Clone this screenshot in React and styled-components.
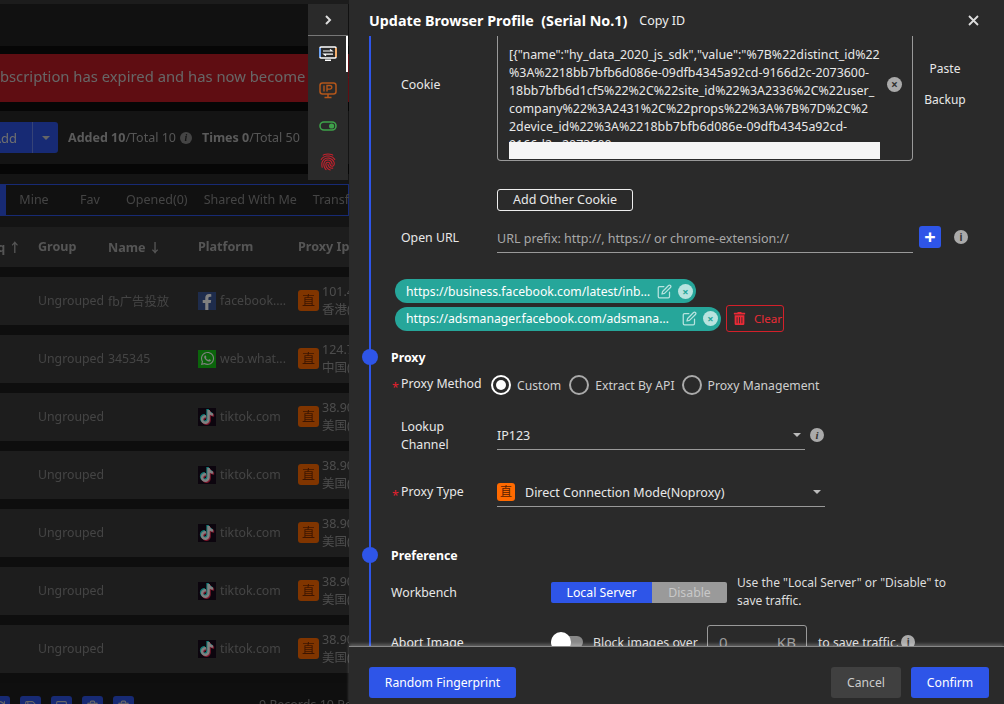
import React from 'react';
import styled, { createGlobalStyle } from 'styled-components';
import { FaFacebookF, FaWhatsapp, FaTiktok, FaTrashAlt } from 'react-icons/fa';
import { IoFingerPrint } from 'react-icons/io5';
import { FiEdit } from 'react-icons/fi';
import { Trash2, Square, Save, RefreshCw } from 'lucide-react';

const GlobalStyle = createGlobalStyle`
  html, body { margin: 0; padding: 0; background: #111; }
  body { font-family: "Noto Sans", "Noto Sans CJK SC", sans-serif; font-size: 13px; }
  * { box-sizing: border-box; }
`;

const Page = styled.div`
  display: flex;
  width: 1004px;
  height: 704px;
  overflow: hidden;
`;

/* background page behind the drawer */
const Behind = styled.div`
  position: relative;
  width: 349px;
  height: 704px;
  flex: none;
  overflow: hidden;
`;

const Dimmed = styled.div`
  height: 100%;
  background: #383838;
  color: #999;
  filter: brightness(0.5);
`;

const TopBar = styled.div`
  height: 46px;
  border-top: 4px solid #383838;
  background: #222;
`;

const Banner = styled.div`
  height: 65px;
  padding: 8px 0 9px;
  background: #0c0c0c;
`;

const BannerInner = styled.div`
  height: 48px;
  line-height: 45px;
  background: #be1a24;
  color: #ccc;
  font-size: 14.8px;
  white-space: nowrap;
  overflow: hidden;
  text-indent: -52px;
`;

const Toolbar = styled.div`
  height: 53px;
  display: flex;
  align-items: center;
  background: #282828;
  white-space: nowrap;
`;

const AddMain = styled.div`
  width: 33px;
  height: 31px;
  padding-right: 15px;
  display: flex;
  justify-content: flex-end;
  align-items: center;
  background: #2e55e8;
  color: #ddd;
  border-right: 1px solid #6c86ee;
`;

const AddCaret = styled.div`
  width: 25px;
  height: 31px;
  display: flex;
  justify-content: center;
  align-items: center;
  background: #2e55e8;
  border-radius: 0 3px 3px 0;
  &::after {
    content: '';
    border: 4px solid transparent;
    border-top: 4px solid #ccc;
    border-bottom: 0;
  }
`;

const Stat = styled.span`
  margin-left: ${p => p.$gap}px;
  font-size: 12.5px;
  color: #aaa;
  b { color: #b4b4b4; font-weight: 700; }
`;

const DimInfo = styled.span`
  width: 12px;
  height: 12px;
  margin-left: 4px;
  border-radius: 50%;
  background: #888;
  color: #282828;
  font: italic 700 10px/12px "Liberation Serif", serif;
  text-align: center;
`;

const Rule = styled.div`
  height: 10px;
  background: #0c0c0c;
`;

const TabsArea = styled.div`
  height: 53px;
  padding: 10px 0 11px;
  background: #282828;
`;

const Tabs = styled.div`
  height: 32px;
  display: flex;
  border: 1px solid #2e55e8;
  border-left: 0;
  background: #222;
  white-space: nowrap;
`;

const ActiveTab = styled.div`
  width: 6px;
  flex: none;
  background: #2e55e8;
`;

const Tab = styled.div`
  flex: none;
  min-width: 56px;
  padding: 0 8px;
  line-height: 30px;
  text-align: center;
  font-size: 12.5px;
  color: #888;
`;

const Table = styled.div`
  display: grid;
  grid-template-columns: 38px 70px 90px 100px 51px;
  white-space: nowrap;
  background: #1c1c1c;
`;

const HeadCell = styled.div`
  height: 40px;
  margin-bottom: 10px;
  padding-bottom: 2px;
  display: flex;
  align-items: center;
  gap: 5px;
  background: #393939;
  font-size: 12.6px;
  font-weight: 700;
  color: #aaa;
  ${p => p.$end && 'justify-content: flex-end; padding-right: 17px;'}
`;

const Cell = styled.div`
  height: 48px;
  margin-bottom: 10px;
  padding-bottom: 1px;
  display: flex;
  align-items: center;
  overflow: hidden;
  background: #393939;
  font-size: 12.3px;
  color: #888;
`;

const SiteIcon = styled.span`
  width: 18px;
  height: 18px;
  flex: none;
  margin-right: 4px;
  display: flex;
  align-items: ${p => p.$low ? 'flex-end' : 'center'};
  justify-content: center;
  overflow: hidden;
  background: ${p => p.$bg};
  color: #fff;
  font-size: ${p => p.$size}px;
  svg { ${p => p.$shade && 'filter: drop-shadow(-1px -1px 0 #25f4ee) drop-shadow(1px 1px 0 #fe2c55);'} }
`;

const DirectBadge = styled.span`
  width: 21px;
  height: 21px;
  flex: none;
  border-radius: 3px;
  background: #ff6a00;
  color: #7a2a00;
  font-size: 13px;
  line-height: 21px;
  text-align: center;
`;

const IpText = styled.div`
  margin-left: 3px;
  font-size: 12.5px;
  line-height: 18px;
  color: #999;
`;

const Pager = styled.div`
  height: 40px;
  display: flex;
  align-items: flex-start;
  padding-top: 13px;
  gap: 10px;
  background: #1e1e1e;
  margin-left: -11px;
`;

const PagerBtn = styled.span`
  width: 21px;
  height: 21px;
  flex: none;
  display: flex;
  align-items: center;
  justify-content: center;
  border-radius: 3px;
  background: #2e55e8;
  color: #ccc;
`;

const PagerText = styled.span`
  margin-left: 115px;
  color: #888;
  font-size: 12.5px;
  white-space: nowrap;
  line-height: 18px;
`;

/* icon rail on the edge of the drawer */
const Rail = styled.div`
  position: absolute;
  top: 4px;
  right: 1px;
  width: 40px;
  height: 176px;
  background: #2a2a2a;
`;

const RailHead = styled.div`
  height: 32px;
  display: flex;
  align-items: center;
  justify-content: center;
  border-bottom: 1px solid #777;
  color: #ddd;
`;

const RailItem = styled.div`
  position: relative;
  height: 36px;
  display: flex;
  align-items: center;
  justify-content: center;
  ${p => p.$active && `
    &::after {
      content: '';
      position: absolute;
      right: 0;
      top: 0;
      width: 2px;
      height: 36px;
      background: #fff;
    }
  `}
`;

/* drawer */
const Drawer = styled.div`
  flex: 1;
  display: flex;
  flex-direction: column;
  background: #2a2a2a;
  color: #e8e8e8;
`;

const DrawerHead = styled.div`
  height: 36px;
  flex: none;
  padding: 5px 25px 0 20px;
  display: flex;
  align-items: center;
`;

const DrawerTitle = styled.div`
  font-size: 14.3px;
  font-weight: 700;
  color: #fff;
  white-space: pre;
`;

const CopyId = styled.span`
  margin-left: 12px;
  font-size: 12.5px;
  color: #eee;
`;

const CloseBtn = styled.span`
  margin-left: auto;
  display: flex;
  color: #ddd;
`;

const DrawerBody = styled.div`
  flex: 1;
  min-height: 0;
  overflow: hidden;
  padding-left: 20px;
`;

const Timeline = styled.div`
  border-left: 2px solid #2e55e8;
  min-height: 640px;
`;

const FieldRow = styled.div`
  display: grid;
  grid-template-columns: 96px 1fr;
  padding-left: 30px;
  margin-top: ${p => p.$top || 0}px;
`;

const FieldLabel = styled.div`
  position: relative;
  padding-top: ${p => p.$pad || 0}px;
  font-size: 12.3px;
  line-height: 18px;
  ${p => p.$required && `
    &::before {
      content: '*';
      position: absolute;
      left: -9px;
      top: ${(p.$pad || 0) + 4}px;
      color: #e5202e;
    }
  `}
`;

const CookieWrap = styled.div`
  display: flex;
  align-items: flex-start;
  height: 125px;
`;

const CookieBox = styled.div`
  position: relative;
  width: 416px;
  height: 125px;
  padding: 10px 22px 0 11px;
  border: 1px solid #999;
  border-top: 0;
  border-radius: 0 0 4px 4px;
  overflow: hidden;
  font-size: 12.4px;
  line-height: 18px;
  white-space: nowrap;
`;

const CookieMask = styled.div`
  position: absolute;
  left: 11px;
  bottom: 1px;
  width: 371px;
  height: 17px;
  background: #f5f5f5;
`;

const ClearRound = styled.span`
  position: absolute;
  right: 10px;
  top: 41px;
  width: 15px;
  height: 15px;
  display: flex;
  align-items: center;
  justify-content: center;
  border-radius: 50%;
  background: #aaa;
  color: #333;
  font-size: 12px;
  font-weight: 700;
  line-height: 15px;
`;

const CookieSide = styled.div`
  width: 52px;
  margin-left: 6px;
  padding-top: 24px;
  display: flex;
  flex-direction: column;
  align-items: center;
  gap: 13px;
  font-size: 12px;
  line-height: 18px;
`;

const OutlineBtn = styled.div`
  width: 136px;
  height: 22px;
  margin: 28px 0 0 126px;
  border: 1px solid #eee;
  border-radius: 3px;
  text-align: center;
  font-size: 12.5px;
  line-height: 20px;
`;

const UnderlineInput = styled.div`
  width: ${p => p.$w}px;
  height: 29px;
  margin-top: ${p => p.$top || 0}px;
  display: flex;
  align-items: center;
  border-bottom: 1px solid #999;
  font-size: 12.5px;
  color: ${p => p.$muted ? '#a8a8a8' : '#e8e8e8'};
  white-space: nowrap;
`;

const InlineRow = styled.div`
  display: flex;
  align-items: flex-start;
`;

const PlusBtn = styled.span`
  width: 22px;
  height: 22px;
  margin: 2px 0 0 6px;
  border-radius: 3px;
  background: #2e55e8;
  color: #fff;
  font-size: 20px;
  font-weight: 700;
  line-height: 21px;
  text-align: center;
`;

const InfoDot = styled.span`
  width: 14px;
  height: 14px;
  flex: none;
  margin: ${p => p.$m || '0'};
  border-radius: 50%;
  background: #aaa;
  color: #333;
  font: ${p => p.$serif ? 'italic 700 11px/14px "Liberation Serif", serif' : '700 10px/14px "Noto Sans", sans-serif'};
  text-align: center;
`;

const ChipList = styled.div`
  margin: 26px 0 0 24px;
  display: flex;
  flex-direction: column;
  align-items: flex-start;
`;

const ChipLine = styled.div`
  display: flex;
  align-items: center;
  gap: 5px;
  margin-top: ${p => p.$top || 0}px;
`;

const Chip = styled.div`
  width: ${p => p.$w}px;
  height: 24px;
  flex: none;
  padding: 0 3px 0 11px;
  display: flex;
  align-items: center;
  border-radius: 12px;
  background: #26a69a;
  color: #fff;
  font-size: 12.2px;
  white-space: nowrap;
`;

const ChipText = styled.span`
  flex: 1;
  min-width: 0;
  overflow: hidden;
  text-overflow: ellipsis;
`;

const ChipEdit = styled.span`
  margin-left: 6px;
  display: flex;
  color: #b8e3df;
`;

const ChipClose = styled.span`
  width: 15px;
  height: 15px;
  margin-left: 6px;
  border-radius: 50%;
  background: #b8e3df;
  color: #26a69a;
  font-size: 11px;
  font-weight: 700;
  line-height: 15px;
  text-align: center;
`;

const ClearBtn = styled.div`
  width: 58px;
  height: 27px;
  flex: none;
  display: flex;
  align-items: center;
  gap: 8px;
  padding-left: 6px;
  border: 1px solid #d3202a;
  border-radius: 3px;
  color: #ea2a36;
  font-size: 11.6px;
  white-space: nowrap;
`;

const SectionTitle = styled.div`
  position: relative;
  height: 20px;
  margin: ${p => p.$top}px 0 0 20px;
  font-size: 12.3px;
  font-weight: 700;
  line-height: 22px;
  color: #fff;
  &::before {
    content: '';
    position: absolute;
    left: -29px;
    top: 2px;
    width: 16px;
    height: 16px;
    border-radius: 50%;
    background: #2e55e8;
  }
`;

const RadioRow = styled.div`
  display: flex;
  align-items: center;
  height: 20px;
  margin-left: -6px;
  font-size: 12.2px;
  color: #cfcfcf;
`;

const Radio = styled.span`
  width: 20px;
  height: 20px;
  flex: none;
  margin: 0 6px 0 ${p => p.$gap}px;
  border-radius: 50%;
  border: 2px solid ${p => p.$on ? '#fff' : '#aaa'};
  display: flex;
  align-items: center;
  justify-content: center;
  &::after {
    content: '';
    width: 10px;
    height: 10px;
    border-radius: 50%;
    background: ${p => p.$on ? '#fff' : 'transparent'};
  }
`;

const Caret = styled.span`
  margin-left: auto;
  margin-right: 4px;
  border: 4px solid transparent;
  border-top: 4px solid #bbb;
  border-bottom: 0;
`;

const TypeIcon = styled.span`
  width: 18px;
  height: 18px;
  margin-right: 10px;
  border-radius: 3px;
  background: #ff6a00;
  color: #5a2000;
  font-size: 12px;
  line-height: 18px;
  text-align: center;
`;

const PrefRow = styled.div`
  display: grid;
  grid-template-columns: 160px auto 1fr;
  align-items: center;
  margin: ${p => p.$top}px 0 0 20px;
  font-size: 12.3px;
`;

const Segmented = styled.div`
  display: flex;
  width: 176px;
  height: 21px;
  border-radius: 2px;
  overflow: hidden;
  line-height: 21px;
  text-align: center;
`;

const Segment = styled.span`
  width: ${p => p.$w}px;
  background: ${p => p.$on ? '#2e55e8' : '#9a9a9a'};
  color: ${p => p.$on ? '#fff' : '#c8c8c8'};
`;

const HelpText = styled.div`
  margin-left: 10px;
  width: 226px;
  font-size: 12px;
  line-height: 18px;
  color: #ddd;
`;

const AbortWrap = styled.div`
  display: flex;
  align-items: center;
  color: #ddd;
  white-space: nowrap;
`;

const Toggle = styled.span`
  position: relative;
  width: 32px;
  height: 12px;
  margin-right: 10px;
  border-radius: 6px;
  background: #888;
  &::after {
    content: '';
    position: absolute;
    left: 0;
    top: -4px;
    width: 20px;
    height: 20px;
    border-radius: 50%;
    background: #fff;
  }
`;

const KbBox = styled.div`
  width: 100px;
  height: 34px;
  margin: 0 11px 0 9px;
  padding: 0 10px 0 11px;
  display: flex;
  align-items: center;
  justify-content: space-between;
  border: 1px solid #999;
  border-radius: 3px;
  font-size: 15px;
  color: #999;
`;

const Footer = styled.div`
  position: relative;
  height: 58px;
  flex: none;
  padding: 20px 15px 0 20px;
  display: flex;
  gap: 10px;
  border-top: 1px solid #888;
  box-shadow: 0 -2px 3px rgba(255, 255, 255, 0.25);
  background: #2a2a2a;
`;

const FootBtn = styled.div`
  width: ${p => p.$w}px;
  height: 31px;
  margin-left: ${p => p.$auto ? 'auto' : 0};
  border-radius: 3px;
  background: ${p => p.$grey ? '#404040' : '#2e55e8'};
  color: ${p => p.$grey ? '#ccc' : '#fff'};
  font-size: 12.2px;
  line-height: 31px;
  text-align: center;
`;

const cookieLines = [
  '[{"name":"hy_data_2020_js_sdk","value":"%7B%22distinct_id%22',
  '%3A%2218bb7bfb6d086e-09dfb4345a92cd-9166d2c-2073600-',
  '18bb7bfb6d1cf5%22%2C%22site_id%22%3A2336%2C%22user_',
  'company%22%3A2431%2C%22props%22%3A%7B%7D%2C%2',
  '2device_id%22%3A%2218bb7bfb6d086e-09dfb4345a92cd-',
  '9166d2c-2073600',
];

const rows = [
  { group: 'Ungrouped', name: 'fb广告投放', site: 'facebook....', kind: 'fb', ip: '101.4', area: '香港(' },
  { group: 'Ungrouped', name: '345345', site: 'web.what...', kind: 'wa', ip: '124.7', area: '中国(' },
  { group: 'Ungrouped', name: '', site: 'tiktok.com', kind: 'tt', ip: '38.90', area: '美国(' },
  { group: 'Ungrouped', name: '', site: 'tiktok.com', kind: 'tt', ip: '38.90', area: '美国(' },
  { group: 'Ungrouped', name: '', site: 'tiktok.com', kind: 'tt', ip: '38.90', area: '美国(' },
  { group: 'Ungrouped', name: '', site: 'tiktok.com', kind: 'tt', ip: '38.90', area: '美国(' },
  { group: 'Ungrouped', name: '', site: 'tiktok.com', kind: 'tt', ip: '38.90', area: '美国(' },
];

const Site = ({ kind }) => {
  if (kind === 'fb') return <SiteIcon $bg="#3b5998" $size={16} $low><FaFacebookF /></SiteIcon>;
  if (kind === 'wa') return <SiteIcon $bg="#16c816" $size={15}><FaWhatsapp /></SiteIcon>;
  return <SiteIcon $bg="#170a1c" $size={14} $shade><FaTiktok /></SiteIcon>;
};

const MonitorSwap = () => (
  <svg width="18" height="16" viewBox="0 0 18 16" fill="none">
    <rect x="1" y="1" width="16" height="11" rx="1" stroke="#fff" strokeWidth="1.6" />
    <path d="M1 2v9" stroke="#3f8cff" strokeWidth="1.4" />
    <path d="M17 2v9" stroke="#ff9d3f" strokeWidth="1.4" />
    <path d="M6 13.5h6v1.5H6z" fill="#fff" />
    <path d="M4 5h9l-2-1.6M14 8.2H5l2 1.6" stroke="#fff" strokeWidth="1.2" />
  </svg>
);

const MonitorIp = () => (
  <svg width="18" height="17" viewBox="0 0 18 17" fill="none" stroke="#b3561a" strokeWidth="1.5">
    <rect x="1" y="1" width="16" height="11" rx="2.5" />
    <path d="M9 12v3M5.5 15.5h7" />
    <path d="M5 3.5v6M8 9.5v-6h3a1.7 1.7 0 0 1 0 3.6H8" strokeWidth="1.4" />
  </svg>
);

const GreenToggle = () => (
  <svg width="18" height="10" viewBox="0 0 18 10" fill="none">
    <rect x="1" y="1" width="16" height="8" rx="4" stroke="#3ea24a" strokeWidth="1.6" />
    <circle cx="12.6" cy="5" r="2.6" fill="#3ea24a" />
  </svg>
);

const App = () => (
  <Page>
    <GlobalStyle />
    <Behind>
      <Dimmed>
        <TopBar />
        <Banner>
          <BannerInner>Your subscription has expired and has now become a free plan</BannerInner>
        </Banner>
        <Toolbar>
          <AddMain>Add</AddMain>
          <AddCaret />
          <Stat $gap={10}><b>Added 10</b>/Total 10</Stat>
          <DimInfo>i</DimInfo>
          <Stat $gap={10}><b>Times 0</b>/Total 50</Stat>
        </Toolbar>
        <Rule />
        <TabsArea>
          <Tabs>
            <ActiveTab />
            <Tab>Mine</Tab>
            <Tab>Fav</Tab>
            <Tab>Opened(0)</Tab>
            <Tab>Shared With Me</Tab>
            <Tab>Transfer</Tab>
          </Tabs>
        </TabsArea>
        <Table>
          <HeadCell $end>Seq ↑</HeadCell>
          <HeadCell>Group</HeadCell>
          <HeadCell>Name ↓</HeadCell>
          <HeadCell>Platform</HeadCell>
          <HeadCell>Proxy Ip</HeadCell>
          {rows.map((r, i) => (
            <React.Fragment key={i}>
              <Cell />
              <Cell>{r.group}</Cell>
              <Cell>{r.name}</Cell>
              <Cell><Site kind={r.kind} />{r.site}</Cell>
              <Cell>
                <DirectBadge>直</DirectBadge>
                <IpText>{r.ip}<br />{r.area}</IpText>
              </Cell>
            </React.Fragment>
          ))}
        </Table>
        <Pager>
          <PagerBtn><RefreshCw size={13} /></PagerBtn>
          <PagerBtn><Save size={13} /></PagerBtn>
          <PagerBtn><Square size={13} /></PagerBtn>
          <PagerBtn><Trash2 size={13} /></PagerBtn>
          <PagerBtn><Trash2 size={13} /></PagerBtn>
          <PagerText>9 Records 10 Per</PagerText>
        </Pager>
      </Dimmed>
      <Rail>
        <RailHead>
          <svg width="10" height="12" viewBox="0 0 10 12" fill="none" stroke="#ddd" strokeWidth="2"><path d="M3 2l4 4-4 4" /></svg>
        </RailHead>
        <RailItem $active><MonitorSwap /></RailItem>
        <RailItem><MonitorIp /></RailItem>
        <RailItem><GreenToggle /></RailItem>
        <RailItem><IoFingerPrint size={18} color="#c8202c" /></RailItem>
      </Rail>
    </Behind>
    <Drawer>
      <DrawerHead>
        <DrawerTitle>Update Browser Profile  (Serial No.1)</DrawerTitle>
        <CopyId>Copy ID</CopyId>
        <CloseBtn>
          <svg width="11" height="11" viewBox="0 0 11 11" stroke="currentColor" strokeWidth="1.8"><path d="M1 1l9 9M10 1L1 10" /></svg>
        </CloseBtn>
      </DrawerHead>
      <DrawerBody>
        <Timeline>
          <FieldRow>
            <FieldLabel $pad={40}>Cookie</FieldLabel>
            <CookieWrap>
              <CookieBox>
                {cookieLines.map(l => <div key={l}>{l}</div>)}
                <CookieMask />
                <ClearRound>×</ClearRound>
              </CookieBox>
              <CookieSide>
                <span>Paste</span>
                <span>Backup</span>
              </CookieSide>
            </CookieWrap>
          </FieldRow>
          <OutlineBtn>Add Other Cookie</OutlineBtn>
          <FieldRow $top={13}>
            <FieldLabel $pad={5}>Open URL</FieldLabel>
            <InlineRow>
              <UnderlineInput $w={416} $muted>URL prefix: http://, https:// or chrome-extension://</UnderlineInput>
              <PlusBtn>+</PlusBtn>
              <InfoDot $m="6px 0 0 13px">i</InfoDot>
            </InlineRow>
          </FieldRow>
          <ChipList>
            <Chip $w={301}>
              <ChipText>https://business.facebook.com/latest/inbox/all</ChipText>
              <ChipEdit><FiEdit size={15} /></ChipEdit>
              <ChipClose>×</ChipClose>
            </Chip>
            <ChipLine $top={2}>
              <Chip $w={326}>
                <ChipText>https://adsmanager.facebook.com/adsmanager/manage</ChipText>
                <ChipEdit><FiEdit size={15} /></ChipEdit>
                <ChipClose>×</ChipClose>
              </Chip>
              <ClearBtn><FaTrashAlt size={13} />Clear</ClearBtn>
            </ChipLine>
          </ChipList>
          <SectionTitle $top={15}>Proxy</SectionTitle>
          <FieldRow $top={8}>
            <FieldLabel $required>Proxy Method</FieldLabel>
            <RadioRow>
              <Radio $on $gap={0} />Custom
              <Radio $gap={8} />Extract By API
              <Radio $gap={7} />Proxy Management
            </RadioRow>
          </FieldRow>
          <FieldRow $top={23}>
            <FieldLabel>Lookup<br />Channel</FieldLabel>
            <InlineRow>
              <UnderlineInput $w={308} $top={3}>IP123<Caret /></UnderlineInput>
              <InfoDot $serif $m="10px 0 0 5px">i</InfoDot>
            </InlineRow>
          </FieldRow>
          <FieldRow $top={24}>
            <FieldLabel $required $pad={5}>Proxy Type</FieldLabel>
            <UnderlineInput $w={328}><TypeIcon>直</TypeIcon>Direct Connection Mode(Noproxy)<Caret /></UnderlineInput>
          </FieldRow>
          <SectionTitle $top={38}>Preference</SectionTitle>
          <PrefRow $top={9}>
            <span>Workbench</span>
            <Segmented>
              <Segment $on $w={101}>Local Server</Segment>
              <Segment $w={75}>Disable</Segment>
            </Segmented>
            <HelpText>Use the "Local Server" or "Disable" to save traffic.</HelpText>
          </PrefRow>
          <PrefRow $top={15}>
            <span>Abort Image</span>
            <AbortWrap>
              <Toggle />
              Block images over
              <KbBox><span>0</span><span>KB</span></KbBox>
              to save traffic.
              <InfoDot $m="0 0 0 2px">i</InfoDot>
            </AbortWrap>
          </PrefRow>
        </Timeline>
      </DrawerBody>
      <Footer>
        <FootBtn $w={147}>Random Fingerprint</FootBtn>
        <FootBtn $grey $auto $w={70}>Cancel</FootBtn>
        <FootBtn $w={78}>Confirm</FootBtn>
      </Footer>
    </Drawer>
  </Page>
);

export default App;
